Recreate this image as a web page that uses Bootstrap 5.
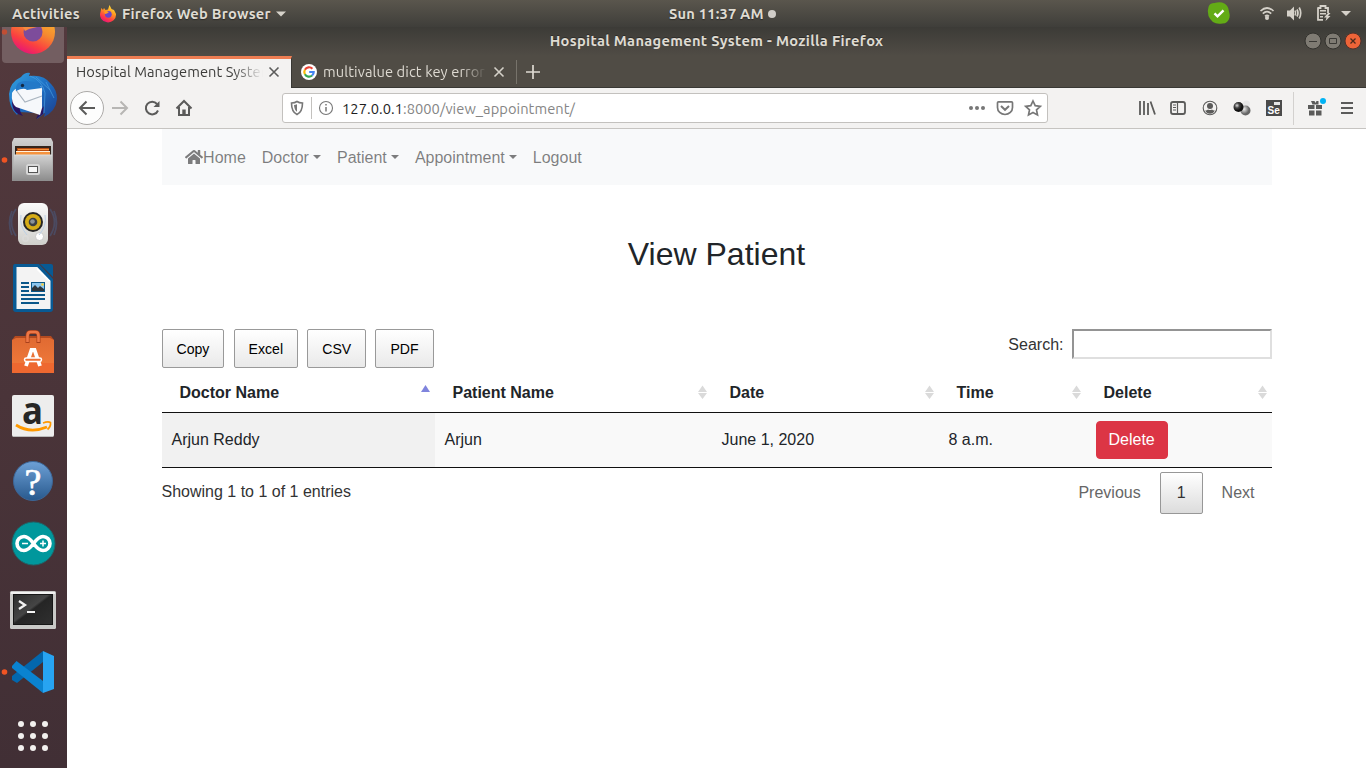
<!DOCTYPE html>
<html lang="en">
<head>
<meta charset="utf-8">
<title>Hospital Management System</title>
<meta name="viewport" content="width=device-width, initial-scale=1">
<link href="https://cdn.jsdelivr.net/npm/bootstrap@5.3.0/dist/css/bootstrap.min.css" rel="stylesheet">
<style>
  body { font-family: "Liberation Sans", Arial, sans-serif; font-size: 16px; line-height: 1.5; color: #212529; background: #fff; }
  svg { display: block; flex-shrink: 0; }
  .desktop { width: 1366px; height: 768px; }
  .ui-font { font-family: Ubuntu, "Noto Sans", sans-serif; font-size: 14.67px; line-height: 20px; white-space: nowrap; }

  .topbar { height: 27px; background: linear-gradient(#5a564d, #3f3e3a); color: #dfdbd2; font-weight: 700; letter-spacing: .26px; text-shadow: 0 1px 1px #2b2a27; }
  .topbar-left { width: 669px; padding-left: 12px; }
  .t-act { width: 88px; }
  .t-app { width: 154px; margin-left: 5px; }
  .t-clock { width: 95px; letter-spacing: .2px; }

  .dock { width: 67px; background: linear-gradient(#53393d, #412f35); }
  .dock-item { width: 67px; height: 64px; flex-shrink: 0; }
  .dock-item.cut { height: 38px; }

  .titlebar { height: 29px; padding-bottom: 1px; background: linear-gradient(#3c3b37, #504c45); color: #dfdbd2; font-weight: 700; letter-spacing: .32px; text-shadow: 0 -1px 0 #2d2c29; }
  .win-btns { right: 4px; top: 5px; gap: 2px; }

  .tabstrip { height: 32px; background: #504c45; border-bottom: 1px solid #393834; }
  .tab-active { width: 225px; height: 32px; background: #f3f2f1; border-top: 3px solid #ef7e53; border-right: 1px solid #393834; color: #3c3c3a; padding: 0 11px 3px 9px; }
  .tab-label { overflow: hidden; -webkit-mask-image: linear-gradient(90deg, #000 84%, transparent 100%); mask-image: linear-gradient(90deg, #000 84%, transparent 100%); }
  .tab-active .tab-label { width: 187px; letter-spacing: .05px; }
  .tab-idle { width: 225px; color: #dedad2; padding: 0 11px 0 9px; border-right: 1px solid #77736b; height: 24px; }
  .tab-idle .tab-label { width: 164px; margin-left: 6px; letter-spacing: .1px; }

  .toolbar { height: 41px; background: #f3f2f1; border-bottom: 1px solid #c6c4c1; padding: 0 11px 0 3px; color: #5b5b5a; }
  .btn-back { width: 34px; height: 34px; border: 1px solid #acaaa8; background: #fdfdfd; }
  .tool-icon { margin-left: 14px; }
  .tool-icon.fwd { margin-left: 7px; }
  .urlbar { width: 766px; height: 30px; margin-left: 89px; background: #fff; border: 1px solid #c3c1be; border-radius: 3px; color: #777; }
  .url-text { color: #858585; width: 625px; padding-top: 1px; letter-spacing: .06px; }
  .url-text b { color: #1e1e1e; font-weight: 400; }

  .page { width: 1110px; margin-left: 94.5px; }
  .site-nav { height: 56px; background: #f8f9fa; padding: 9px 16px 7px; }
  .site-nav .nav-link { color: rgba(0,0,0,.5); padding: 8px; height: 40px; }
  .site-nav .home-icon { margin: -2px 0 0 -.4px; }
  .site-nav .dropdown-toggle::after { margin-left: 4.08px; vertical-align: 4px; }
  .page-title { font-size: 32px; line-height: 38.4px; font-weight: 400; margin: 50px 0 55.6px; text-align: center; }

  .dt-buttons { column-gap: 9.1px; }
  .dt-btn { font-size: 14.08px; line-height: 22.5px; padding: 8.2px 14.05px 6.2px; border: 1px solid #999; border-radius: 2px; background: linear-gradient(#fff, #e9e9e9); color: #000; }
  .dt-search { color: #333; gap: 8px; height: 30px; }
  .dt-search span { padding-top: 2px; }
  .dt-search input { width: 200px; height: 30px; border: 2px solid; border-color: #949494 #dfdfdf #dfdfdf #949494; }

  .dt-table { width: 1110px; table-layout: fixed; border-collapse: separate; border-spacing: 0; }
  .dt-table th { padding: 13px 18px 7px; border-bottom: 1px solid #111; font-weight: 700; position: relative; height: 45px; line-height: 24px; }
  .dt-table td { padding: 8px 10px; background: #f9f9f9; border-bottom: 1px solid #111; vertical-align: middle; height: 55px; }
  .dt-table td.sorted { background: #f1f1f1; }
  .dt-table th svg { position: absolute; right: 5px; top: 17px; }
  .btn-del { --bs-btn-bg: #dc3545; --bs-btn-border-radius: 4px; line-height: 24px; }
  .dt-info { color: #333; padding-top: 12px; }
  .dt-paging { padding-top: 4px; gap: 2px; color: #666; }
  .dt-page { padding: 8px 16px; border: 1px solid transparent; line-height: 24px; border-radius: 2px; }
  .dt-page.current { color: #333; border-color: #979797; background: linear-gradient(#fff, #dcdcdc); }
</style>
</head>
<body class="overflow-hidden">
<div class="desktop d-flex flex-column overflow-hidden">

  <!-- GNOME panel -->
  <header class="topbar ui-font d-flex align-items-center flex-shrink-0">
    <div class="topbar-left d-flex align-items-center flex-shrink-0">
      <span class="t-act">Activities</span>
      <svg width="17" height="18" viewBox="0 0 17 18"><defs><linearGradient id="ff" x1=".8" y1="0" x2=".3" y2="1"><stop offset="0" stop-color="#fff044"/><stop offset=".4" stop-color="#ff9b1f"/><stop offset=".75" stop-color="#ff3c45"/><stop offset="1" stop-color="#e8127c"/></linearGradient></defs><path d="M.5 7 1.300 3l1.700 2 1-2 1.500 2L8 4.500 9.500 0l2 4L14 5l2 4a8 7.800 0 1 1-15.500-2z" fill="url(#ff)"/><circle cx="8.300" cy="9.300" r="3.400" fill="#6b45c8"/><path d="M4 6.500c2-1 3 0 5 .5L7 8.500l-2 .5z" fill="#ff9b1f"/></svg>
      <span class="t-app">Firefox Web Browser</span>
      <svg width="10" height="6"><path d="M0 .500h10l-5 5z" fill="#d6d2ca"/></svg>
    </div>
    <span class="t-clock">Sun 11:37 AM</span>
    <svg class="ms-1" width="8" height="8"><circle cx="4" cy="4" r="4" fill="#d0cdc8"/></svg>
    <div class="ms-auto d-flex align-items-center flex-shrink-0">
      <svg width="166" height="27" viewBox="1200 0 166 27" fill="#d5d1c9">
        <path d="M1208.500 7q1-4 6-4 3.500-1 7.500-.5 6.500 2 7 9 1 3 .5 6-1.500 6-7 6-10 2-14-7.500-1.500-5 0-9z" fill="#63ab16"/>
        <path d="m1214.500 13.300 3 3 6-6" fill="none" stroke="#fff" stroke-width="2.400"/>
        <g fill="none" stroke="#d5d1c9" stroke-width="1.700"><path d="M1260.500 11q6.500-6 13 0M1262.800 13.700q4.200-4 8.400 0M1265 16.300q2-1.700 4 0"/><path d="M1297 9.500q2 3.500 0 7M1299.200 7.500q3 5.500 0 11" /></g>
        <circle cx="1267" cy="18" r="2"/>
        <path d="M1287 10.500h3l4-4v14l-4-4h-3z"/>
        <path d="M1295 10.500q1.200 2.500 0 5" stroke="#d5d1c9" fill="none" stroke-width="1.500"/>
        <path d="M1318 8h2.500V6h5v2h2.500v5M1318 7.200v12.600h5" fill="none" stroke="#d5d1c9" stroke-width="1.800"/>
        <path d="M1320 10h6v1.500h-6zM1320 13h6v1.500h-6zM1320 16h3v1.500h-3zM1328 13l-4 4.500h2.500l-1 3.500 5-5h-2.500l2.500-3z"/>
        <path d="M1341 11h10l-5 5z"/>
      </svg>
    </div>
  </header>

  <div class="d-flex flex-grow-1 overflow-hidden">

    <!-- launcher -->
    <aside class="dock d-flex flex-column flex-shrink-0 overflow-hidden">
      <svg class="dock-item cut" viewBox="0 27 67 38">
        <path d="M2 27h62v32q0 4-4 4H6q-4 0-4-4z" fill="#735e61"/>
        <defs><linearGradient id="fx" x1=".8" y1="0" x2=".3" y2="1"><stop offset="0" stop-color="#ffc02e"/><stop offset=".45" stop-color="#f58a30"/><stop offset=".75" stop-color="#fb4040"/><stop offset="1" stop-color="#e5137a"/></linearGradient></defs>
        <circle cx="33" cy="32" r="22" fill="url(#fx)"/><circle cx="33" cy="32" r="9.500" fill="#7d4c9b"/>
        <path d="M23 27h14l-8 2-4 2z" fill="#f58a40"/><circle cx="4.500" cy="32" r="2.700" fill="#c04e34"/>
      </svg>
      <svg class="dock-item" viewBox="0 65 67 64">
        <defs><linearGradient id="tb" x1="0" y1="0" x2="1" y2="1"><stop offset="0" stop-color="#35a3e0"/><stop offset=".5" stop-color="#1d6fc4"/><stop offset="1" stop-color="#1c3c8c"/></linearGradient></defs>
        <g transform="translate(0 1)">
        <path d="M9 93q1-12 12-17 4-5 9-4l-1 3q15-2 22 8 6 6 6 15-1 12-13 18l1-4-8 6 2-6-20-1-2 3q-8-7-8-21z" fill="url(#tb)"/>
        <path d="M12 98q-1 14 11 17-4-5-3-10zM39 111l5-6-1 8-7 5z" fill="#2a1460"/>
        <path d="M12 92q2-4 6-5l23-2q2 3 1 7v15l-2 7-24-8q-5-4-4-14z" fill="#f6f8fb"/>
        <path d="m16 89 9 12 17-6" fill="none" stroke="#a9b4bf" stroke-width="1.200"/>
        <path d="M16 90q-1-10 10-10 12 0 16 7l-15 2q-3-3-11 1z" fill="#2379c8"/>
        <circle cx="22.500" cy="84.500" r="1.700" fill="#142a44"/>
        <path d="M30 75q12 4 15 17l-1 20M46 81l8 16M36 76l14 13" fill="none" stroke="#4fa5e6" stroke-width="1" opacity=".6"/>
        </g>
      </svg>
      <svg class="dock-item" viewBox="0 129 67 64">
        <defs><linearGradient id="fl" x1="0" y1="0" x2="0" y2="1"><stop offset="0" stop-color="#d2d2d2"/><stop offset="1" stop-color="#8e8e8e"/></linearGradient></defs>
        <circle cx="4.500" cy="160" r="2.800" fill="#f05423"/>
        <path d="M14 138h37l2 4v39H12v-39z" fill="url(#fl)"/>
        <path d="M15 146h36v9H15z" fill="#33251d"/><path d="M17 148h32v7H17z" fill="#b84c10"/><path d="M18 149h31v1H18zM16 151h34v4H16z" fill="#f5933f"/><path d="M16 151h34v1H16z" fill="#fff2df"/>
        <path d="M14 155h38l1 25H12z" fill="url(#fl)"/><path d="M14 155h38" stroke="#ddd"/>
        <rect x="26" y="164" width="14" height="11" rx="2.500" fill="#d7d7d7"/><rect x="28.500" y="166.500" width="9" height="6" fill="#f7f7f7" stroke="#555"/>
      </svg>
      <svg class="dock-item" viewBox="0 193 67 64">
        <defs><linearGradient id="rb" x1="0" y1="0" x2="0" y2="1"><stop offset="0" stop-color="#fafafa"/><stop offset="1" stop-color="#cfcfcb"/></linearGradient></defs>
        <g fill="none" stroke="#4b4a60" stroke-width="1.800"><path d="M16 209q-9 13 0 27M12 211q-5 12 0 24M50 209q9 13 0 27M54 211q5 12 0 24"/></g>
        <rect x="18" y="203" width="30" height="42" rx="6" fill="url(#rb)"/>
        <circle cx="33" cy="222" r="10" fill="#262626"/><circle cx="33" cy="222" r="8" fill="#d5ac17"/><circle cx="33" cy="222" r="4.300" fill="#3b4045"/><circle cx="32.500" cy="221.500" r="2.300" fill="#8b9398"/>
        <circle cx="39.500" cy="236.500" r="4" fill="#fff" stroke="#bbb" stroke-width=".7"/><rect x="23" y="236" width="5" height="5" rx="1" fill="none" stroke="#ddd"/>
        <path d="M21 215q-2 11 6 20M45 215q2 11-6 20" fill="none" stroke="#bcd0e6" stroke-width="1"/>
      </svg>
      <svg class="dock-item" viewBox="0 257 67 64">
        <path d="M15 264h24l14 15v30q0 3-3 3H16q-3 0-3-3v-42q0-3 2-3zM40 264h11q2 0 2 2v11z" fill="#085a94"/>
        <path d="M16.500 267h20.500L50.500 281v28h-34z" fill="#f3f3f3"/><path d="M37 267v3l11 11h2.500z" fill="#fff"/>
        <path d="M21 282h8v2h-8zM21 286h8v2h-8zM21 290h8v2h-8zM21 294h24v2H21zM21 298h24v2H21zM21 302h18v2H21z" fill="#0b5789"/>
        <path d="M31 282h14v10H31z" fill="#0b5789"/><path d="M32 283h12v8H32z" fill="#8cc5ed"/><path d="m32 291 0-3 3-3 3 3 2-2 4 3v2z" fill="#2e353b"/><circle cx="42.500" cy="284.500" r="1.300" fill="#f5cf3a"/>
      </svg>
      <svg class="dock-item" viewBox="0 321 67 64">
        <defs><linearGradient id="sw" x1="0" y1="0" x2="0" y2="1"><stop offset="0" stop-color="#e06a32"/><stop offset="1" stop-color="#f37c3c"/></linearGradient></defs>
        <path d="m12 340 3-4h36l3 4z" fill="#b34a20"/><path d="M12 340l4-2h34l4 2v33H12z" fill="url(#sw)"/><path d="M12 363h42v10H12z" fill="#ee6830"/>
        <path d="M27.500 343v-7q0-4 3-4h5q3 0 3 4v7" fill="none" stroke="#a8401b" stroke-width="4"/><path d="M27.500 342v-6q0-4 3-4h5q3 0 3 4v6" fill="none" stroke="#ee7746" stroke-width="2.600"/>
        <path d="m26 366 5.500-16h3l5.500 16" fill="none" stroke="#fff" stroke-width="3.800"/><rect x="24.500" y="358" width="17" height="3.500" rx="1.700" fill="#ec6f35" stroke="#fff" stroke-width="1.500"/>
      </svg>
      <svg class="dock-item" viewBox="0 385 67 64">
        <rect x="12" y="395" width="42" height="42" rx="2" fill="#ededed"/><path d="M13 436.500h40" stroke="#bbb"/>
        <text x="22" y="423.500" font-family="Open Sans, sans-serif" font-weight="700" font-size="38" textLength="21" lengthAdjust="spacingAndGlyphs" fill="#262626">a</text>
        <path d="M16 425q14 9 31 2" fill="none" stroke="#ff9900" stroke-width="2.800"/><path d="M43 423q5-2 7.500-.5.500 4-3 7" fill="none" stroke="#ff9900" stroke-width="1.700"/>
      </svg>
      <svg class="dock-item" viewBox="0 449 67 64">
        <defs><linearGradient id="hp" x1="0" y1="0" x2="0" y2="1"><stop offset="0" stop-color="#6da0d6"/><stop offset="1" stop-color="#28598d"/></linearGradient></defs>
        <circle cx="33" cy="481" r="19.500" fill="url(#hp)" stroke="#3c6697"/>
        <text x="33" y="494.500" text-anchor="middle" font-family="Liberation Serif, serif" font-size="38" fill="#fff" stroke="#fff" stroke-width=".7">?</text>
      </svg>
      <svg class="dock-item" viewBox="0 513 67 64">
        <circle cx="33.500" cy="543.500" r="21.500" fill="#00979c" stroke="#1b696d"/>
        <path d="M33.500 543.500c-4-5.500-7-7-9.500-7a7 7 0 0 0 0 14c2.500 0 5.500-1.500 9.500-7s7-7 9.500-7a7 7 0 0 1 0 14c-2.500 0-5.500-1.500-9.500-7z" fill="none" stroke="#fff" stroke-width="3.600"/>
        <path d="M22 543.500h6M40 543.500h6M43 540.500v6" stroke="#fff" stroke-width="1.500"/>
      </svg>
      <svg class="dock-item" viewBox="0 577 67 64">
        <defs><linearGradient id="tm" x1="0" y1="0" x2="1" y2="1"><stop offset="0" stop-color="#2c2c2c"/><stop offset=".45" stop-color="#454545"/><stop offset=".5" stop-color="#252525"/><stop offset="1" stop-color="#303030"/></linearGradient></defs>
        <rect x="10" y="591" width="46" height="38" rx="1.500" fill="#c9c9c7"/><path d="M11 592h44v2H11z" fill="#f1f1f1"/><rect x="13.500" y="594.500" width="39" height="30" fill="url(#tm)" stroke="#171717"/>
        <path d="m19 601 6 4-6 4" fill="none" stroke="#f3f3f3" stroke-width="2.300"/><path d="M27 612h8" stroke="#f3f3f3" stroke-width="2"/>
      </svg>
      <svg class="dock-item" viewBox="0 641 67 64">
        <circle cx="4.500" cy="672" r="2.800" fill="#f05423"/>
        <path d="M43 651v11L17 683l-5-3v-4z" fill="#0367ad"/><path d="M12 666l4.500-5L43 681v12L12 668z" fill="#0a83d0"/><path d="m43 651 11 5v33l-11 4z" fill="#27a4f2"/>
      </svg>
      <svg class="dock-item" viewBox="0 705 67 64" fill="#f2f0ee">
        <circle cx="21" cy="724" r="3"/><circle cx="33" cy="724" r="3"/><circle cx="45" cy="724" r="3"/><circle cx="21" cy="736" r="3"/><circle cx="33" cy="736" r="3"/><circle cx="45" cy="736" r="3"/><circle cx="21" cy="748" r="3"/><circle cx="33" cy="748" r="3"/><circle cx="45" cy="748" r="3"/>
      </svg>
    </aside>

    <!-- browser window -->
    <main class="flex-grow-1 bg-white overflow-hidden">
      <div class="titlebar ui-font d-flex align-items-center justify-content-center position-relative">
        <span>Hospital Management System - Mozilla Firefox</span>
        <div class="win-btns d-flex position-absolute">
          <svg width="18" height="18"><circle cx="9" cy="9" r="8" fill="#7f7b73" stroke="#33322e"/><path d="M5 9.500h8" stroke="#3a3935"/></svg>
          <svg width="18" height="18"><circle cx="9" cy="9" r="8" fill="#7f7b73" stroke="#33322e"/><path d="M5.500 6.500h7v5h-7z" fill="none" stroke="#3a3935"/></svg>
          <svg width="18" height="18"><circle cx="9" cy="9" r="8" fill="#ee6438" stroke="#52312a"/><path d="m6.500 6.500 5 5m0-5-5 5" stroke="#4c2a1c" stroke-width="1.300"/></svg>
        </div>
      </div>

      <div class="tabstrip ui-font d-flex align-items-center">
        <div class="tab-active d-flex align-items-center justify-content-between align-self-start flex-shrink-0">
          <span class="tab-label">Hospital Management System</span>
          <svg width="12" height="12"><path d="m1.500 1.500 9 9m0-9-9 9" stroke="#5c5c5b" stroke-width="1.600"/></svg>
        </div>
        <div class="tab-idle d-flex align-items-center flex-shrink-0">
          <svg width="16" height="16" viewBox="0 0 16 16"><circle cx="8" cy="8" r="8" fill="#fff"/><g fill="none" stroke-width="2.200"><path d="M11.400 4.700A4.700 4.700 0 0 0 3.900 5.700" stroke="#ea4335"/><path d="M3.900 5.700a4.700 4.700 0 0 0 0 4.600" stroke="#fbbc05"/><path d="M3.900 10.300a4.700 4.700 0 0 0 7.200 1.200" stroke="#34a853"/><path d="M11.100 11.500q1.600-1.400 1.600-3.500H8.200" stroke="#4285f4"/></g></svg>
          <span class="tab-label">multivalue dict key error</span>
          <svg class="ms-auto" width="12" height="12"><path d="m1.500 1.500 9 9m0-9-9 9" stroke="#d5d1c9" stroke-width="1.600"/></svg>
        </div>
        <svg class="ms-2" width="16" height="16"><path d="M8 1v14M1 8h14" stroke="#dedad2" stroke-width="1.700"/></svg>
      </div>

      <div class="toolbar ui-font d-flex align-items-center">
        <span class="btn-back rounded-circle d-flex align-items-center justify-content-center flex-shrink-0">
          <svg width="18" height="16" fill="none" stroke="#5b5b5a" stroke-width="2"><path d="M17 8H2M8.500 1.500 2 8l6.500 6.500"/></svg>
        </span>
        <svg class="tool-icon fwd" width="18" height="16" fill="none" stroke="#b7b6b4" stroke-width="2"><path d="M1 8h15M9.500 1.500 16 8l-6.500 6.500"/></svg>
        <svg class="tool-icon" width="18" height="18" viewBox="0 0 18 18"><path d="M15 11.500A6.300 6.300 0 1 1 14 5" fill="none" stroke="#5b5b5a" stroke-width="2"/><path d="M16.500 2v6H10.500z" fill="#5b5b5a"/></svg>
        <svg class="tool-icon" width="18" height="18" viewBox="0 0 18 18"><path d="M1.500 9.500 9 2l7.500 7.500M4 8v8h10V8" fill="none" stroke="#5b5b5a" stroke-width="2"/><path d="M7.300 16v-5.500h3.400V16z" fill="#5b5b5a"/></svg>
        <div class="urlbar d-flex align-items-center flex-shrink-0">
          <svg width="59" height="28" viewBox="283 94 59 28" fill="none" stroke="#777">
            <path d="M291.500 103q3.500 0 5.500-1.500 2 1.500 5.500 1.500 0 9-5.500 11.500-5.500-2.500-5.500-11.500z" stroke-width="1.600"/><path d="M297 104.200q-1.600.8-3 .8.300 5 3 6.800z" fill="#777" stroke="none"/>
            <path d="M311.500 97v22" stroke="#c3c1be"/><circle cx="326" cy="108" r="6.500" stroke-width="1.100"/><path d="M326 107v4.500M326 104v1.600" stroke-width="1.500"/>
          </svg>
          <span class="url-text"><b>127.0.0.1</b>:8000/view_appointment/</span>
          <svg width="78" height="28" viewBox="967 94 78 28" fill="none" stroke="#777" stroke-width="1.700">
            <g fill="#777" stroke="none"><circle cx="971" cy="108" r="2"/><circle cx="977" cy="108" r="2"/><circle cx="983" cy="108" r="2"/></g>
            <path d="M998.500 101.800h13q1 0 1 1v4.700a7.500 7 0 0 1-15 0v-4.700q0-1 1-1z"/><path d="m1001 106 4 3.800 4-3.800" stroke-width="2"/>
            <path d="m1033 101 2.200 4.700 5.100.6-3.800 3.500 1 5.100-4.500-2.500-4.500 2.500 1-5.100-3.800-3.500 5.100-.6z"/>
          </svg>
        </div>
        <svg class="ms-auto" width="220" height="40" viewBox="1135 88 220 40" fill="none" stroke="#5b5b5a" stroke-width="2">
          <path d="M1140 101v14M1144 101v14M1148 103v12M1150.500 101.500l4.500 13" stroke-width="1.800"/>
          <rect x="1171" y="102" width="14" height="12" rx="2" stroke-width="1.800"/><path d="M1177.500 102v12" stroke-width="1.200"/><path d="M1173 105h3M1173 107.500h3M1173 110h3" stroke-width="1"/>
          <circle cx="1210" cy="108" r="6.800" stroke-width="1.100"/><circle cx="1210" cy="106" r="3" fill="#5b5b5a" stroke="none"/><path d="M1205.200 110.500q1.800.2 2.800-.9 2 1 4 0 1 1.100 2.800.9-1.600 3.200-4.800 3.200t-4.800-3.200z" fill="#5b5b5a" stroke="none"/>
          <g stroke="none"><defs><radialGradient id="b1" cx=".35" cy=".35"><stop offset="0" stop-color="#ddd"/><stop offset=".5" stop-color="#444"/><stop offset="1" stop-color="#111"/></radialGradient><radialGradient id="b2" cx=".35" cy=".35"><stop offset="0" stop-color="#eee"/><stop offset="1" stop-color="#666"/></radialGradient></defs><circle cx="1246.500" cy="104" r="3.500" fill="#e7e7e7"/><circle cx="1245.500" cy="110.500" r="5" fill="url(#b2)"/><circle cx="1238.500" cy="107" r="5" fill="url(#b1)"/></g>
          <rect x="1266" y="100" width="16" height="16" fill="#4b4b4b" stroke="none"/><path d="M1274 102h6v3h-6z" fill="#e7e7e7" stroke="none"/><text x="1267.500" y="114.300" font-size="10" font-weight="700" font-family="Liberation Sans, sans-serif" fill="#fff" stroke="none">Se</text>
          <path d="M1293.500 92v33" stroke="#d3d1cf" stroke-width="1"/>
          <path d="M1308 105h6.500v4h-6.500zM1316 105h6v4h-6zM1309 110.500h5.500v5H1309zM1316 110.500h5.500v5H1316zM1311 101h3.500l1 2 1-2h2v3.500h-6z" fill="#5b5b5a" stroke="none"/><circle cx="1323" cy="101" r="3" fill="#00b3f4" stroke="none"/>
          <path d="M1341 103h12M1341 108h12M1341 113h12"/>
        </svg>
      </div>

      <!-- web page -->
      <div class="page">
        <nav class="site-nav nav flex-nowrap">
          <a class="nav-link d-flex align-items-center" href="#"><svg class="home-icon" width="18" height="16" viewBox="0 0 576 512" fill="#7c7c7d"><path d="M280.400 148.300 96 300.100V464a16 16 0 0 0 16 16l112-.3a16 16 0 0 0 16-16V368a16 16 0 0 1 16-16h64a16 16 0 0 1 16 16v95.600a16 16 0 0 0 16 16L464 480a16 16 0 0 0 16-16V300L295.700 148.300a12.200 12.200 0 0 0-15.300 0zM571.600 251.500 488 182.600V44a12 12 0 0 0-12-12h-56a12 12 0 0 0-12 12v72.600L318.500 43a48 48 0 0 0-61 0L4.300 251.500a12 12 0 0 0-1.600 16.900l25.500 31a12 12 0 0 0 16.900 1.600L280.400 107.200a12.200 12.200 0 0 1 15.300 0L530.900 301a12 12 0 0 0 16.900-1.600l25.500-31a12 12 0 0 0-1.700-16.900z"/></svg>Home</a>
          <a class="nav-link dropdown-toggle" href="#">Doctor</a>
          <a class="nav-link dropdown-toggle" href="#">Patient</a>
          <a class="nav-link dropdown-toggle" href="#">Appointment</a>
          <a class="nav-link" href="#">Logout</a>
        </nav>

        <h2 class="page-title">View Patient</h2>

        <div class="d-flex justify-content-between align-items-start">
          <div class="dt-buttons d-flex">
            <button class="dt-btn">Copy</button>
            <button class="dt-btn">Excel</button>
            <button class="dt-btn">CSV</button>
            <button class="dt-btn">PDF</button>
          </div>
          <label class="dt-search d-flex align-items-center"><span>Search:</span><input type="text"></label>
        </div>

        <table class="dt-table">
          <colgroup><col width="273"><col width="277"><col width="227"><col width="147"><col width="186"></colgroup>
          <thead>
            <tr>
              <th>Doctor Name<svg width="9" height="14"><path d="M4.500 0 9 7H0z" fill="#7f84dd"/></svg></th>
              <th>Patient Name<svg width="9" height="14"><path d="M4.500.500 9 7H0zM0 8h9l-4.500 6z" fill="#dadada"/></svg></th>
              <th>Date<svg width="9" height="14"><path d="M4.500.500 9 7H0zM0 8h9l-4.500 6z" fill="#dadada"/></svg></th>
              <th>Time<svg width="9" height="14"><path d="M4.500.500 9 7H0zM0 8h9l-4.500 6z" fill="#dadada"/></svg></th>
              <th>Delete<svg width="9" height="14"><path d="M4.500.500 9 7H0zM0 8h9l-4.500 6z" fill="#dadada"/></svg></th>
            </tr>
          </thead>
          <tbody>
            <tr>
              <td class="sorted">Arjun Reddy</td>
              <td>Arjun</td>
              <td>June 1, 2020</td>
              <td>8 a.m.</td>
              <td><button class="btn btn-danger btn-del">Delete</button></td>
            </tr>
          </tbody>
        </table>

        <div class="d-flex justify-content-between align-items-start">
          <div class="dt-info">Showing 1 to 1 of 1 entries</div>
          <div class="dt-paging d-flex">
            <span class="dt-page">Previous</span>
            <span class="dt-page current">1</span>
            <span class="dt-page">Next</span>
          </div>
        </div>
      </div>
    </main>
  </div>
</div>
<script src="https://cdn.jsdelivr.net/npm/bootstrap@5.3.0/dist/js/bootstrap.bundle.min.js"></script>
</body>
</html>
